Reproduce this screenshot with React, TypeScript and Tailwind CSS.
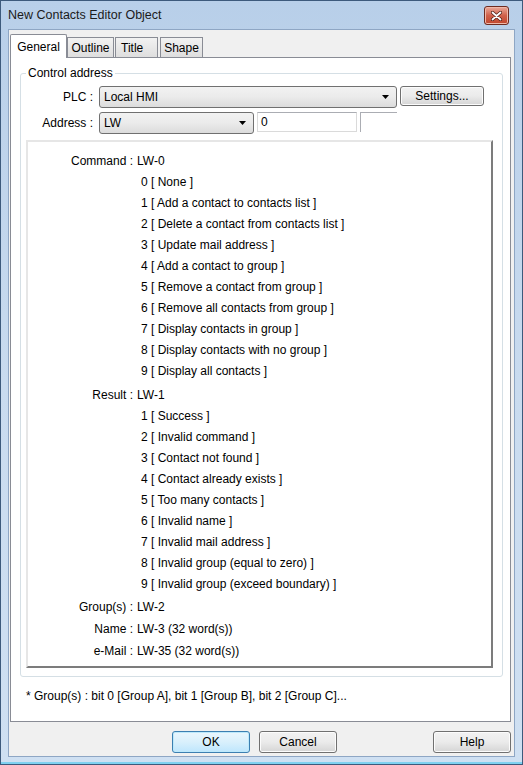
const commands = [
  '0 [ None ]',
  '1 [ Add a contact to contacts list ]',
  '2 [ Delete a contact from contacts list ]',
  '3 [ Update mail address ]',
  '4 [ Add a contact to group ]',
  '5 [ Remove a contact from group ]',
  '6 [ Remove all contacts from group ]',
  '7 [ Display contacts in group ]',
  '8 [ Display contacts with no group ]',
  '9 [ Display all contacts ]',
]

const results = [
  '1 [ Success ]',
  '2 [ Invalid command ]',
  '3 [ Contact not found ]',
  '4 [ Contact already exists ]',
  '5 [ Too many contacts ]',
  '6 [ Invalid name ]',
  '7 [ Invalid mail address ]',
  '8 [ Invalid group (equal to zero) ]',
  '9 [ Invalid group (exceed boundary) ]',
]

function Arrow() {
  return (
    <svg width="7" height="4" viewBox="0 0 7 4" className="shrink-0">
      <path d="M0 0h7L3.5 4z" fill="#000" />
    </svg>
  )
}

function Combo({ value, width }: { value: string; width: string }) {
  return (
    <div
      className={`${width} h-[22px] flex items-center justify-between pl-[4px] pr-[7px] rounded-[3px] border border-[#707070] bg-gradient-to-b from-[#f2f2f2] via-[#ebebeb] to-[#dcdcdc]`}
    >
      <span>{value}</span>
      <Arrow />
    </div>
  )
}

function Button({ label, primary = false }: { label: string; primary?: boolean }) {
  return (
    <div
      className={`w-[78px] h-[22px] flex items-center justify-center rounded-[3px] border ${
        primary
          ? 'border-[#3c7fb1] bg-gradient-to-b from-[#eaf6fd] via-[#d9f0fc] to-[#bee6fd] shadow-[inset_0_0_0_1px_#bde9fb]'
          : 'border-[#707070] bg-gradient-to-b from-[#f2f2f2] via-[#ebebeb] to-[#d5d5d5] shadow-[inset_0_0_0_1px_#fcfcfc]'
      }`}
    >
      {label}
    </div>
  )
}

function Line({ label, value, tall = false }: { label: string; value: string; tall?: boolean }) {
  return (
    <div className={`flex ${tall ? 'h-[22px]' : 'h-[21px]'} items-center`}>
      <span className="w-[105px] text-right">{label}</span>
      <span className="pl-[4px]">{value}</span>
    </div>
  )
}

function Item({ text }: { text: string }) {
  return <div className="h-[21px] flex items-center pl-[113px]">{text}</div>
}

export default function App() {
  return (
    <div className="w-[523px] h-[765px] flex flex-col border border-[#3d5a7c] bg-gradient-to-b from-[#b8cfe9] via-[#c9dbef] to-[#cfe0f2] text-[12px] text-black font-['Liberation_Sans',Arial,sans-serif] shadow-[inset_0_-2px_0_#7fd1f0]">
      {/* title bar */}
      <div className="h-[28px] flex items-center justify-between pl-[7px] pr-[13px]">
        <span className="text-[12.5px] text-[#1b1b1b] mt-[1px]">New Contacts Editor Object</span>
        <div className="w-[25px] h-[19px] mt-[5px] self-start flex items-center justify-center rounded-[3px] border border-[#6e2b20] bg-gradient-to-b from-[#e9a99a] via-[#d0614b] to-[#c0452c] shadow-[inset_0_0_0_1px_#f0b8a8]">
          <svg width="11" height="10" viewBox="0 0 11 10">
            <path d="M1.5 1.5l8 7M9.5 1.5l-8 7" stroke="#4a1d14" strokeWidth="3.2" strokeLinecap="round" />
            <path d="M1.5 1.5l8 7M9.5 1.5l-8 7" stroke="#fff" strokeWidth="1.8" strokeLinecap="round" />
          </svg>
        </div>
      </div>

      {/* client area */}
      <div className="mx-[7px] mb-[7px] flex-1 flex flex-col bg-[#f0f0f0] border border-[#8ea6c4]">
        {/* tabs */}
        <div className="flex items-end h-[27px] pl-[1px]">
          <div className="relative z-10 -mb-px w-[57px] h-[24px] flex items-start justify-center pt-[3px] bg-white border border-b-0 border-[#898c95] rounded-t-[2px]">
            General
          </div>
          <div className="w-[47px] h-[20px] flex items-center justify-center border border-b-0 border-[#898c95] bg-gradient-to-b from-[#f2f2f2] to-[#dedede]">
            Outline
          </div>
          <div className="ml-[1px] w-[43px] h-[20px] flex items-center justify-start pl-[5px] border border-b-0 border-[#898c95] bg-gradient-to-b from-[#f2f2f2] to-[#dedede]">
            Title
          </div>
          <div className="ml-[2px] w-[43px] h-[20px] flex items-center justify-center border border-b-0 border-[#898c95] bg-gradient-to-b from-[#f2f2f2] to-[#dedede]">
            Shape
          </div>
        </div>

        {/* tab panel */}
        <div className="ml-[1px] mr-[3px] h-[665px] flex flex-col bg-white border border-[#898c95]">
          <fieldset className="mt-[8px] ml-[9px] mr-[7px] h-[611px] border border-[#d5dfe5] rounded-[3px] px-0">
            <legend className="ml-[5px] px-[2px] leading-[14px]">Control address</legend>

            <div className="flex items-center mt-[6px]">
              <span className="w-[72px] text-right">PLC :</span>
              <div className="ml-[6px]">
                <Combo value="Local HMI" width="w-[298px]" />
              </div>
              <div className="ml-[3px] self-start w-[84px] h-[20px] flex items-center justify-center rounded-[3px] border border-[#707070] bg-gradient-to-b from-[#f2f2f2] via-[#ebebeb] to-[#d5d5d5] shadow-[inset_0_0_0_1px_#fcfcfc]">
                Settings...
              </div>
            </div>

            <div className="flex items-center mt-[4px]">
              <span className="w-[72px] text-right">Address :</span>
              <div className="ml-[6px]">
                <Combo value="LW" width="w-[155px]" />
              </div>
              <div className="ml-[3px] self-start w-[100px] h-[20px] flex items-center pl-[3px] border border-[#dadada] border-t-[#abadb3]">
                0
              </div>
              <div className="ml-[3px] self-start w-[37px] h-[20px] border-t border-l border-[#abadb3]" />
            </div>

            {/* info panel */}
            <div className="mt-[6px] ml-[5px] mr-[9px] h-[528px] border-2 border-t-[#e6e6e6] border-l-[#e6e6e6] border-r-[#7c7c7c] border-b-[#7c7c7c] pt-[8px]">
              <Line label="Command :" value="LW-0" />
              {commands.map((c) => (
                <Item key={c} text={c} />
              ))}
              <div className="h-[3px]" />
              <Line label="Result :" value="LW-1" />
              {results.map((r) => (
                <Item key={r} text={r} />
              ))}
              <div className="h-[2px]" />
              <Line label="Group(s) :" value="LW-2" tall />
              <Line label="Name :" value="LW-3 (32 word(s))" tall />
              <Line label="e-Mail :" value="LW-35 (32 word(s))" tall />
            </div>
          </fieldset>

          <div className="mt-[10px] pl-[15px]">* Group(s) : bit 0 [Group A], bit 1 [Group B], bit 2 [Group C]...</div>
        </div>

        {/* buttons */}
        <div className="flex mt-[9px] pl-[163px] pr-[3px]">
          <Button label="OK" primary />
          <div className="ml-[9px]">
            <Button label="Cancel" />
          </div>
          <div className="ml-auto">
            <Button label="Help" />
          </div>
        </div>
      </div>
    </div>
  )
}
